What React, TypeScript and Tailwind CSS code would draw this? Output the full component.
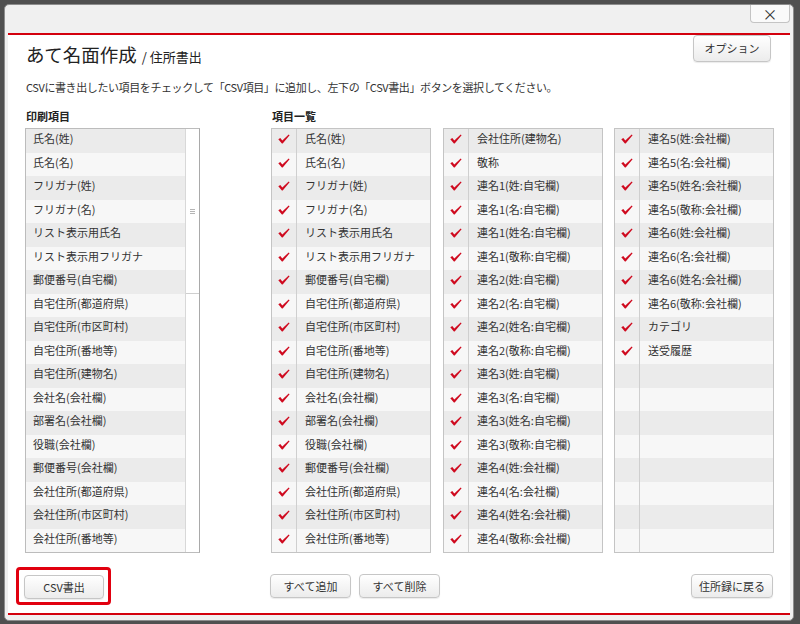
import type { ReactNode } from 'react'

const printItems = [
  '氏名(姓)',
  '氏名(名)',
  'フリガナ(姓)',
  'フリガナ(名)',
  'リスト表示用氏名',
  'リスト表示用フリガナ',
  '郵便番号(自宅欄)',
  '自宅住所(都道府県)',
  '自宅住所(市区町村)',
  '自宅住所(番地等)',
  '自宅住所(建物名)',
  '会社名(会社欄)',
  '部署名(会社欄)',
  '役職(会社欄)',
  '郵便番号(会社欄)',
  '会社住所(都道府県)',
  '会社住所(市区町村)',
  '会社住所(番地等)',
]

const colB = [
  '会社住所(建物名)',
  '敬称',
  '連名1(姓:自宅欄)',
  '連名1(名:自宅欄)',
  '連名1(姓名:自宅欄)',
  '連名1(敬称:自宅欄)',
  '連名2(姓:自宅欄)',
  '連名2(名:自宅欄)',
  '連名2(姓名:自宅欄)',
  '連名2(敬称:自宅欄)',
  '連名3(姓:自宅欄)',
  '連名3(名:自宅欄)',
  '連名3(姓名:自宅欄)',
  '連名3(敬称:自宅欄)',
  '連名4(姓:会社欄)',
  '連名4(名:会社欄)',
  '連名4(姓名:会社欄)',
  '連名4(敬称:会社欄)',
]

const colC = [
  '連名5(姓:会社欄)',
  '連名5(名:会社欄)',
  '連名5(姓名:会社欄)',
  '連名5(敬称:会社欄)',
  '連名6(姓:会社欄)',
  '連名6(名:会社欄)',
  '連名6(姓名:会社欄)',
  '連名6(敬称:会社欄)',
  'カテゴリ',
  '送受履歴',
]

const ROWS = 18

function Check() {
  return (
    <svg width="12" height="10" viewBox="0 0 12 10" aria-hidden="true">
      <path
        d="M0.3 5.3 L2.3 4 L4.3 6.4 L10.7 0.4 L11.6 1.3 L4.7 9.6 L3.9 9.6 Z"
        fill="#cf0a1f"
      />
    </svg>
  )
}

function Btn({ children, className = '' }: { children: ReactNode; className?: string }) {
  return (
    <button
      type="button"
      className={`h-[24px] rounded-[4px] border border-[#c6c6c6] bg-gradient-to-b from-white to-[#ececec] text-[11px] text-[#333] shadow-[0_1px_1px_rgba(0,0,0,0.08)] ${className}`}
    >
      {children}
    </button>
  )
}

function CheckList({ items }: { items: string[] }) {
  const rows = Array.from({ length: ROWS }, (_, i) => items[i] ?? null)
  return (
    <div className="h-[425px] w-[160px] border border-[#c4c4c4]">
      {rows.map((label, i) => (
        <div
          key={i}
          className={`flex h-[23.5px] ${i % 2 === 0 ? 'bg-[#ebebeb]' : 'bg-[#f7f7f7]'}`}
        >
          <div className="flex w-[25px] shrink-0 items-center justify-center border-r border-[#cfcfcf] pb-[3px]">
            {label && <Check />}
          </div>
          <div className="flex items-center truncate pb-[5px] pl-[8px] text-[11px] text-[#333]">
            {label}
          </div>
        </div>
      ))}
    </div>
  )
}

export default function App() {
  return (
    <div className="h-[624px] w-[800px] bg-[#505050] pl-[4px] pt-[4px] font-['Noto_Sans_CJK_JP','Noto_Sans',sans-serif]">
      <div className="flex h-[617px] w-[790px] flex-col rounded-[5px] border border-[#8d8d8d] bg-[#f0f0f0]">
        {/* header band */}
        <div className="flex h-[28px] justify-end pr-[3px]">
          <button
            type="button"
            className="flex h-[18px] w-[40px] items-center justify-center rounded-b-[4px] border border-t-0 border-[#c4c4c4] bg-[#fafafa] text-[15px] leading-none text-[#333]"
          >
            ×
          </button>
        </div>

        {/* panel */}
        <div className="mx-[3px] flex h-[582px] flex-col border-y-2 border-[#d3000d] bg-white pl-[17px] pr-[16px]">
          <div className="flex h-[27px] items-start justify-between">
            <div className="flex items-baseline pl-[1px] pt-[8px] text-[#222]">
              <span className="text-[18.5px] leading-[22px]">あて名面作成</span>
              <span className="ml-[5px] text-[13px]">/ 住所書出</span>
            </div>
            <Btn className="mr-[3px] h-[27px] w-[78px]">オプション</Btn>
          </div>

          <p className="mt-[17px] pl-[1px] text-[11px] leading-[16px] tracking-[-0.4px] text-[#333]">
            CSVに書き出したい項目をチェックして「CSV項目」に追加し、左下の「CSV書出」ボタンを選択してください。
          </p>

          <div className="mt-[14px] flex text-[11px] font-bold leading-[14px] text-[#222]">
            <div className="w-[246px] pl-[1px]">印刷項目</div>
            <div className="pl-[1px]">項目一覧</div>
          </div>

          <div className="mt-[5px] flex">
            <div className="flex h-[425px] w-[175px] border border-[#bcbcbc] border-r-[#a9a9a9]">
              <div className="flex-1 overflow-hidden">
                {printItems.map((label, i) => (
                  <div
                    key={label}
                    className={`flex h-[23.5px] items-center pb-[5px] pl-[7px] text-[11px] text-[#333] ${
                      i % 2 === 0 ? 'bg-[#ebebeb]' : 'bg-[#f7f7f7]'
                    }`}
                  >
                    {label}
                  </div>
                ))}
              </div>
              <div className="w-[14px] border-l border-[#d8d8d8] bg-white">
                <div className="flex h-[165px] items-center justify-center border-b border-[#cfcfcf]">
                  <div className="flex flex-col gap-[1px]">
                    <div className="h-px w-[5px] bg-[#b5b5b5]" />
                    <div className="h-px w-[5px] bg-[#b5b5b5]" />
                    <div className="h-px w-[5px] bg-[#b5b5b5]" />
                  </div>
                </div>
              </div>
            </div>

            <div className="ml-[71px]">
              <CheckList items={printItems} />
            </div>
            <div className="ml-[12px]">
              <CheckList items={colB} />
            </div>
            <div className="ml-[11px]">
              <CheckList items={colC} />
            </div>
          </div>

          <div className="mt-[15px] flex h-[36px] items-center">
            <div className="-ml-[9px] rounded-[4px] border-[3px] border-[#e1000f] py-[3px] pl-[5px] pr-[4px]">
              <Btn className="w-[80px]">CSV書出</Btn>
            </div>
            <Btn className="ml-[159px] w-[81px]">すべて追加</Btn>
            <Btn className="ml-[8px] w-[81px]">すべて削除</Btn>
            <Btn className="ml-auto mr-[1px] w-[82px]">住所録に戻る</Btn>
          </div>
        </div>
      </div>
    </div>
  )
}
